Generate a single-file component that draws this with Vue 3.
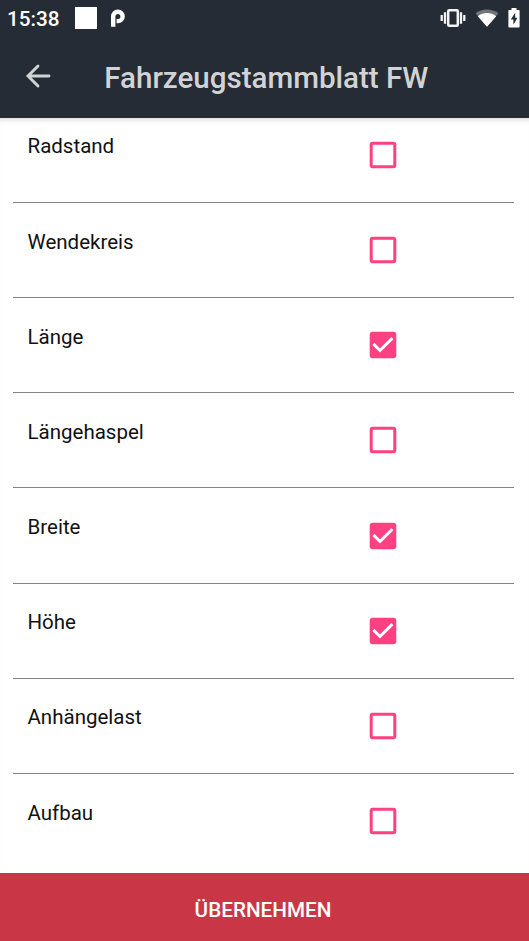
<script setup>
import { reactive } from 'vue'

const fields = reactive([
  { label: 'Radstand', checked: false },
  { label: 'Wendekreis', checked: false },
  { label: 'Länge', checked: true },
  { label: 'Längehaspel', checked: false },
  { label: 'Breite', checked: true },
  { label: 'Höhe', checked: true },
  { label: 'Anhängelast', checked: false },
  { label: 'Aufbau', checked: false },
])
</script>

<template>
  <div class="screen">
    <div class="status">
      <span class="time">15:38</span>
      <span class="square"></span>
      <svg class="p-icon" width="16" height="20" viewBox="0 0 16 20">
        <path d="M3.2 18.8V8.4a4.7 4.7 0 1 1 4.7 4.7H6.6" fill="none" stroke="#fff" stroke-width="4.4" />
      </svg>
      <div class="system">
        <svg width="26" height="20" viewBox="0 0 26 20" fill="none" stroke="#f4f4f5">
          <rect x="8.2" y="2.2" width="9.6" height="15.6" rx="1" stroke-width="2.5" />
          <path d="M5 4.3v11.4M21 4.3v11.4M1.7 7v6M24.3 7v6" stroke-width="2.3" />
        </svg>
        <svg width="24" height="20" viewBox="0 0 24 20">
          <path d="M0.5 5.2C7.2.3 16.8.3 23.5 5.2L12 18.8z" fill="#70757b" />
          <path d="M2.8 8.2c5.2-4.4 13.2-4.4 18.4 0L12 18.8z" fill="#fff" />
        </svg>
        <svg width="12" height="20" viewBox="0 0 12 20">
          <path d="M3.5 0h5v2H11q.6 0 .6.7v16q0 .8-.8.8H1.2q-.8 0-.8-.8v-16Q.4 2 1 2h2.5z" fill="#fff" />
          <path d="M7.2 4.7 2.8 11.5h2.6v5.2l4-7H7.2z" fill="#252c35" />
        </svg>
      </div>
    </div>
    <header class="toolbar">
      <svg class="back" width="26" height="26" viewBox="0 0 26 26" fill="none" stroke="#d2d3d4" stroke-width="2.9" stroke-linecap="round">
        <path d="M24 13H3M13 3 3 13l10 10" />
      </svg>
      <h1>Fahrzeugstammblatt FW</h1>
    </header>
    <main class="content">
      <div class="list">
        <div v-for="field in fields" :key="field.label" class="row" @click="field.checked = !field.checked">
          <span class="label">{{ field.label }}</span>
          <svg class="box" width="28" height="28" viewBox="0 0 28 28" fill="none">
            <template v-if="field.checked">
              <rect x="0.7" y="0.7" width="26.6" height="26.6" rx="3" fill="#ff4081" />
              <path d="M4.4 12.9 11 19.5 23.4 7.1" stroke="#fff" stroke-width="2.9" />
            </template>
            <rect v-else x="2.2" y="2.2" width="23.6" height="23.6" rx="1.5" stroke="#ff4081" stroke-width="3" />
          </svg>
        </div>
      </div>
    </main>
    <button class="submit">ÜBERNEHMEN</button>
  </div>
</template>

<style>
body {
  margin: 0;
}
</style>

<style scoped>
.screen {
  display: flex;
  flex-direction: column;
  width: 529px;
  height: 941px;
  overflow: hidden;
  background: #fff;
  font-family: Roboto, sans-serif;
}
svg {
  display: block;
}
.status {
  display: flex;
  align-items: center;
  flex: none;
  box-sizing: border-box;
  height: 36px;
  padding: 0 9px 0 7px;
  background: #252c35;
  color: #fff;
}
.time {
  width: 68px;
  font-size: 20.7px;
  line-height: 36px;
  padding-top: 2px;
  font-weight: 500;
}
.square {
  width: 22px;
  height: 22px;
  background: #fff;
}
.p-icon {
  margin-left: 13px;
}
.system {
  display: flex;
  margin-left: auto;
  gap: 9px;
}
.toolbar {
  display: flex;
  align-items: center;
  flex: none;
  box-sizing: border-box;
  height: 82px;
  padding-left: 25px;
  background: #252c35;
}
.back {
  margin-top: -2px;
}
h1 {
  margin: 2px 0 0 53.3px;
  font-size: 29.55px;
  line-height: 40px;
  font-weight: 500;
  color: #d2d3d4;
  white-space: nowrap;
}
.content {
  flex: 1;
  min-height: 0;
  overflow: hidden;
  box-shadow: inset 0 6px 5px -4px #ddd;
}
.list {
  margin: -10.2px 15px 0 13px;
}
.row {
  display: grid;
  grid-template-columns: 341.5px auto;
  align-items: start;
  justify-content: start;
  box-sizing: border-box;
  height: 95.17px;
  padding-left: 14.5px;
  border-bottom: 1px solid #858585;
}
.row:last-child {
  border-bottom: 0;
}
.label {
  margin-top: 26.6px;
  font-size: 20.5px;
  line-height: 25px;
  color: #111;
}
.box {
  margin-top: 33.2px;
}
.submit {
  flex: none;
  height: 68px;
  padding: 5px 3px 0 0;
  border: 0;
  background: #c93746;
  color: #fff;
  font-family: inherit;
  font-size: 20.7px;
  font-weight: 500;
}
</style>
